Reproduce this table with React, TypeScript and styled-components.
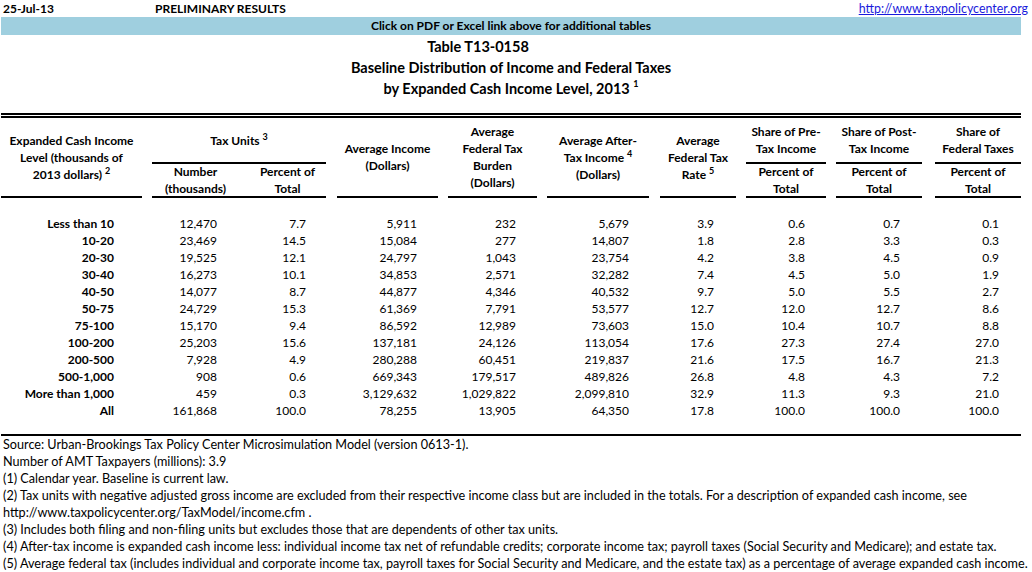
import React from "react";
import styled, { createGlobalStyle } from "styled-components";

const GlobalStyle = createGlobalStyle`
    body {
        margin: 0;
        background: #fff;
        color: #000;
        font-family: Lato, "Liberation Sans", sans-serif;
        font-size: 12px;
    }
`;

// label, number, percent, avg income, burden, after-tax, rate, pre, post, federal
const padRight = [28, 22, 20, 21, 21, 20, 22, 21, 22, 22];

const rows: string[][] = [
    ["Less than 10", "12,470", "7.7", "5,911", "232", "5,679", "3.9", "0.6", "0.7", "0.1"],
    ["10-20", "23,469", "14.5", "15,084", "277", "14,807", "1.8", "2.8", "3.3", "0.3"],
    ["20-30", "19,525", "12.1", "24,797", "1,043", "23,754", "4.2", "3.8", "4.5", "0.9"],
    ["30-40", "16,273", "10.1", "34,853", "2,571", "32,282", "7.4", "4.5", "5.0", "1.9"],
    ["40-50", "14,077", "8.7", "44,877", "4,346", "40,532", "9.7", "5.0", "5.5", "2.7"],
    ["50-75", "24,729", "15.3", "61,369", "7,791", "53,577", "12.7", "12.0", "12.7", "8.6"],
    ["75-100", "15,170", "9.4", "86,592", "12,989", "73,603", "15.0", "10.4", "10.7", "8.8"],
    ["100-200", "25,203", "15.6", "137,181", "24,126", "113,054", "17.6", "27.3", "27.4", "27.0"],
    ["200-500", "7,928", "4.9", "280,288", "60,451", "219,837", "21.6", "17.5", "16.7", "21.3"],
    ["500-1,000", "908", "0.6", "669,343", "179,517", "489,826", "26.8", "4.8", "4.3", "7.2"],
    ["More than 1,000", "459", "0.3", "3,129,632", "1,029,822", "2,099,810", "32.9", "11.3", "9.3", "21.0"],
    ["All", "161,868", "100.0", "78,255", "13,905", "64,350", "17.8", "100.0", "100.0", "100.0"],
];

const notes = [
    "Source: Urban-Brookings Tax Policy Center Microsimulation Model (version 0613-1).",
    "Number of AMT Taxpayers (millions): 3.9",
    "(1) Calendar year. Baseline is current law.",
    "(2) Tax units with negative adjusted gross income are excluded from their respective income class but are included in the totals. For a description of expanded cash income, see",
    "http://www.taxpolicycenter.org/TaxModel/income.cfm .",
    "(3) Includes both filing and non-filing units but excludes those that are dependents of other tax units.",
    "(4) After-tax income is expanded cash income less: individual income tax net of refundable credits; corporate income tax; payroll taxes (Social Security and Medicare); and estate tax.",
    "(5) Average federal tax (includes individual and corporate income tax, payroll taxes for Social Security and Medicare, and the estate tax) as a percentage of average expanded cash income.",
];

export default function App() {
    return (
        <>
            <GlobalStyle />
            <Page>
                <TopRow>
                    <DateText>25-Jul-13</DateText>
                    <Prelim>PRELIMINARY RESULTS</Prelim>
                    <SiteLink href="#">http://www.taxpolicycenter.org</SiteLink>
                </TopRow>
                <Banner>Click on PDF or Excel link above for additional tables</Banner>
                <Titles>
                    <TitleLine $shift={66}>Table T13-0158</TitleLine>
                    <TitleLine>Baseline Distribution of Income and Federal Taxes</TitleLine>
                    <TitleLine>
                        by Expanded Cash Income Level, 2013 <TitleSup>1</TitleSup>
                    </TitleLine>
                </Titles>
                <Table>
                    <HeadGrid>
                        <HeadCell $col="1" $row="1 / 3" $gap={0}>
                            <span>Expanded Cash Income</span>
                            <span>Level (thousands of</span>
                            <span>
                                2013 dollars) <Sup>2</Sup>
                            </span>
                        </HeadCell>
                        <HeadCell $col="2 / 4" $row="1" $gap={10}>
                            <span>
                                Tax Units <Sup>3</Sup>
                            </span>
                        </HeadCell>
                        <HeadCell $col="2" $row="2" $gap={10}>
                            <span>Number</span>
                            <span>(thousands)</span>
                        </HeadCell>
                        <HeadCell $col="3" $row="2" $gap={0} $indent={10}>
                            <span>Percent of</span>
                            <span>Total</span>
                        </HeadCell>
                        <HeadCell $col="4" $row="1 / 3" $gap={11}>
                            <span>Average Income</span>
                            <span>(Dollars)</span>
                        </HeadCell>
                        <HeadCell $col="5" $row="1 / 3" $gap={10}>
                            <span>Average</span>
                            <span>Federal Tax</span>
                            <span>Burden</span>
                            <span>(Dollars)</span>
                        </HeadCell>
                        <HeadCell $col="6" $row="1 / 3" $gap={10}>
                            <span>Average After-</span>
                            <span>
                                Tax Income <Sup>4</Sup>
                            </span>
                            <span>(Dollars)</span>
                        </HeadCell>
                        <HeadCell $col="7" $row="1 / 3" $gap={11}>
                            <span>Average</span>
                            <span>Federal Tax</span>
                            <span>
                                Rate <Sup>5</Sup>
                            </span>
                        </HeadCell>
                        <HeadCell $col="8" $row="1" $gap={10}>
                            <span>Share of Pre-</span>
                            <span>Tax Income</span>
                        </HeadCell>
                        <HeadCell $col="8" $row="2" $gap={10}>
                            <span>Percent of</span>
                            <span>Total</span>
                        </HeadCell>
                        <HeadCell $col="9" $row="1" $gap={10}>
                            <span>Share of Post-</span>
                            <span>Tax Income</span>
                        </HeadCell>
                        <HeadCell $col="9" $row="2" $gap={10}>
                            <span>Percent of</span>
                            <span>Total</span>
                        </HeadCell>
                        <HeadCell $col="10" $row="1" $gap={13}>
                            <span>Share of</span>
                            <span>Federal Taxes</span>
                        </HeadCell>
                        <HeadCell $col="10" $row="2" $gap={13}>
                            <span>Percent of</span>
                            <span>Total</span>
                        </HeadCell>
                    </HeadGrid>
                    <BodyGrid>
                        {rows.map((row) =>
                            row.map((value, i) => (
                                <Cell key={row[0] + i} $bold={i === 0} $pad={padRight[i]}>
                                    {value}
                                </Cell>
                            ))
                        )}
                    </BodyGrid>
                </Table>
                <Notes>
                    {notes.map((note) => (
                        <Note key={note}>{note}</Note>
                    ))}
                </Notes>
            </Page>
        </>
    );
}

const COLUMNS = "141px 97px 87px 112px 99px 112px 87px 90px 96px 99px";

const Page = styled.div`
    width: 1032px;
    height: 572px;
    overflow: hidden;
`;

const TopRow = styled.div`
    display: grid;
    grid-template-columns: 152px 1fr auto;
    align-items: end;
    height: 17px;
    padding: 0 4px 0 3px;
    line-height: 16px;
`;

const DateText = styled.span`
    font-weight: 700;
`;

const Prelim = styled.span`
    font-weight: 700;
`;

const SiteLink = styled.a`
    color: #1a1adc;
    text-decoration: underline;
    font-size: 12.4px;
`;

const Banner = styled.div`
    margin-left: 1px;
    width: 1020px;
    height: 18px;
    line-height: 18px;
    background: #9fcfdf;
    text-align: center;
    font-weight: 700;
`;

const Titles = styled.div`
    margin: 1px 0 0 1px;
    width: 1020px;
`;

const TitleLine = styled.div<{ $shift?: number }>`
    height: 21px;
    line-height: 21px;
    text-align: center;
    font-size: 14.5px;
    font-weight: 700;
    padding-right: ${(p) => p.$shift ?? 0}px;
`;

const TitleSup = styled.sup`
    font-size: 9px;
    vertical-align: 7px;
    line-height: 1;
`;

const Table = styled.div`
    margin: 14px 0 0 1px;
    width: 1020px;
    border-top: 5px double #000;
`;

const HeadGrid = styled.div`
    display: grid;
    grid-template-columns: ${COLUMNS};
    grid-template-rows: 46px 34px;
`;

const HeadCell = styled.div<{ $col: string; $row: string; $gap: number; $indent?: number }>`
    grid-column: ${(p) => p.$col};
    grid-row: ${(p) => p.$row};
    margin-left: ${(p) => p.$gap}px;
    padding-left: ${(p) => p.$indent ?? 0}px;
    display: flex;
    flex-direction: column;
    justify-content: center;
    align-items: center;
    text-align: center;
    font-weight: 700;
    line-height: 17px;
    white-space: nowrap;
    border-bottom: 2px solid #000;
`;

const Sup = styled.sup`
    font-size: 9px;
    vertical-align: 5px;
    line-height: 1;
`;

const BodyGrid = styled.div`
    display: grid;
    grid-template-columns: ${COLUMNS};
    grid-auto-rows: 17px;
    padding-top: 17px;
`;

const Cell = styled.div<{ $bold?: boolean; $pad: number }>`
    text-align: right;
    line-height: 17px;
    white-space: nowrap;
    padding-right: ${(p) => p.$pad}px;
    font-weight: ${(p) => (p.$bold ? 700 : 400)};
`;

const Notes = styled.div`
    margin: 15px 0 0 1px;
    width: 1020px;
    border-top: 2px solid #000;
`;

const Note = styled.div`
    height: 17px;
    line-height: 17px;
    padding-left: 2px;
    font-size: 12.65px;
    white-space: nowrap;
`;
